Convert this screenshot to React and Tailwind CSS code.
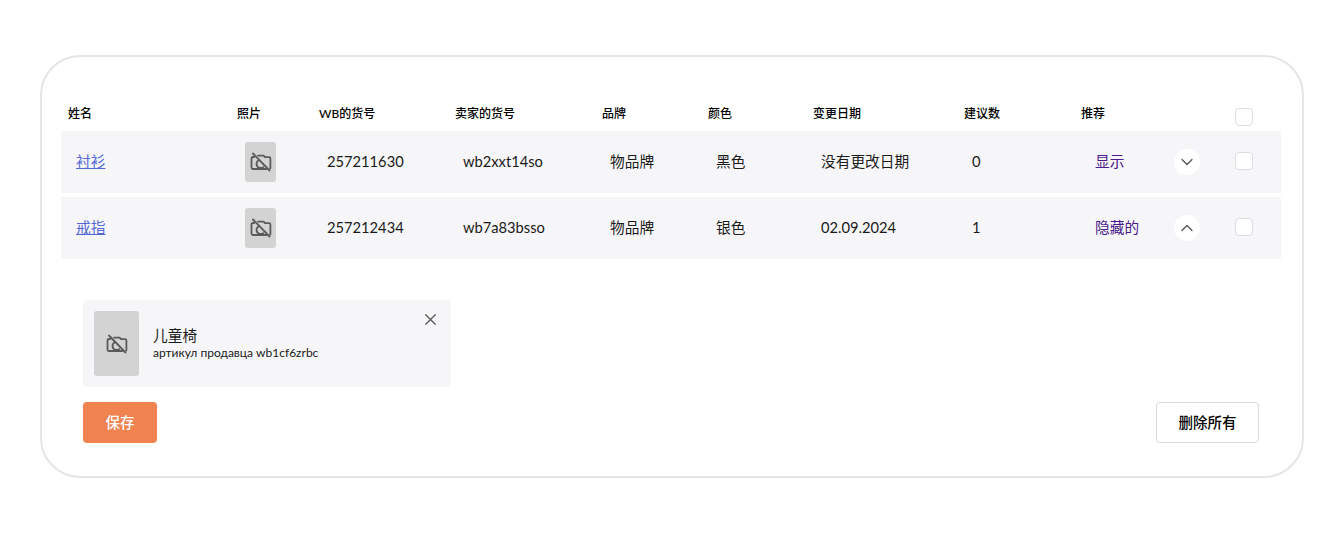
import React from 'react';
import { ChevronDown, ChevronUp, X } from 'lucide-react';

const font = "font-['Lato','Noto_Sans_CJK_SC',sans-serif]";
const cols = 'grid grid-cols-[169px_82px_136px_147px_106px_105px_151px_117px_90px_1fr] items-center';

const headers = ['姓名', '照片', 'WB的货号', '卖家的货号', '品牌', '颜色', '变更日期', '建议数', '推荐'];

const rows = [
  { name: '衬衫', wb: '257211630', seller: 'wb2xxt14so', date: '没有更改日期', color: '黑色', count: '0', rec: '显示', open: false },
  { name: '戒指', wb: '257212434', seller: 'wb7a83bsso', date: '02.09.2024', color: '银色', count: '1', rec: '隐藏的', open: true },
];

// camera with a slash through it, the placeholder for a missing photo
const NoPhoto = () => (
  <svg width="22" height="22" viewBox="0 0 22 22" fill="none" stroke="#5a5a5a" strokeWidth="1.8" strokeLinecap="round" strokeLinejoin="round">
    <path d="M4.200 6H2.900C2 6 1.500 6.600 1.500 7.400v9.200c0 .8.600 1.400 1.400 1.400h13.600" />
    <path d="M8 4.600h5.600l1.400 1.600h4c.8 0 1.400.6 1.400 1.400v9.200c0 .4-.1.7-.3 1" />
    <path d="M8.400 9.600a4 4 0 0 0 1.400 7.300 4 4 0 0 0 3.400-.8" />
    <path d="M3 2.500 19.500 19.500" />
  </svg>
);

const Checkbox = () => (
  <div className="w-[18px] h-[18px] bg-white border border-[#dcdce2] rounded-[4px]" />
);

const App = () => {
  return (
    <div className={`${font} w-[1344px] h-[533px] bg-white pt-[55px] pl-10`}>
      <div className="w-[1264px] h-[423px] border-2 border-[#e5e5e7] rounded-[40px] pt-[45px] pl-[19px] pr-[21px]">
        {/* Table head */}
        <div className={`${cols} h-[29px] text-xs font-medium text-black`}>
          {headers.map((h) => (
            <div key={h} className="pl-[7px] pb-[6px] leading-4">{h}</div>
          ))}
          <div className="pl-[71px] pt-[1px]"><Checkbox /></div>
        </div>

        {/* Table rows */}
        <div className="flex flex-col gap-1">
          {rows.map((r) => (
            <div key={r.wb} className={`${cols} h-[62px] bg-[#f6f6f8] text-[14.7px] text-[#1a1a1a]`}>
              <div className="pl-[15px] -mt-[2px]"><a className="text-[#5468d4] underline">{r.name}</a></div>
              <div className="pl-[15px]">
                <div className="w-[31px] h-10 bg-[#d3d3d3] rounded-[3px] flex items-center justify-center"><NoPhoto /></div>
              </div>
              <div className="pl-[15px] -mt-[2px]">{r.wb}</div>
              <div className="pl-[15px] -mt-[2px]">{r.seller}</div>
              <div className="pl-[15px] -mt-[2px]">物品牌</div>
              <div className="pl-[15px] -mt-[2px]">{r.color}</div>
              <div className="pl-[15px] -mt-[2px]">{r.date}</div>
              <div className="pl-[15px] -mt-[2px]">{r.count}</div>
              <div className="pl-[21px] -mt-[2px] text-[#4b1a8c]">{r.rec}</div>
              <div className="flex items-center ml-[10px]">
                <div className="w-[26px] h-[26px] rounded-full bg-white flex items-center justify-center text-[#555]">
                  {r.open ? <ChevronUp size={20} strokeWidth={1.5} /> : <ChevronDown size={20} strokeWidth={1.5} />}
                </div>
                <div className="ml-[35px] -mt-[2px]"><Checkbox /></div>
              </div>
            </div>
          ))}
        </div>

        {/* Selected item */}
        <div className="ml-[22px] mt-[41px] relative w-[368px] h-[87px] bg-[#f6f6f8] rounded-[4px] pl-[11px] flex items-center gap-[14px]">
          <div className="w-[45px] h-[65px] bg-[#d3d3d3] rounded-[3px] flex items-center justify-center"><NoPhoto /></div>
          <div className="text-[#1a1a1a] -mt-[2px]">
            <div className="text-[14.7px] leading-5">儿童椅</div>
            <div className="text-xs leading-[15px]">артикул продавца wb1cf6zrbc</div>
          </div>
          <X size={19} strokeWidth={1.5} className="absolute top-[10px] right-[11px] text-[#555]" />
        </div>

        {/* Actions */}
        <div className="ml-[22px] mr-[22px] mt-[15px] flex justify-between">
          <button className="w-[74px] h-[41px] bg-[#f0834f] rounded-[4px] text-white text-[14.5px] font-medium">保存</button>
          <button className="w-[103px] h-[41px] bg-white border border-[#d9d9de] rounded-[4px] text-black text-[14.5px] font-medium">删除所有</button>
        </div>
      </div>
    </div>
  );
};

export default App;
